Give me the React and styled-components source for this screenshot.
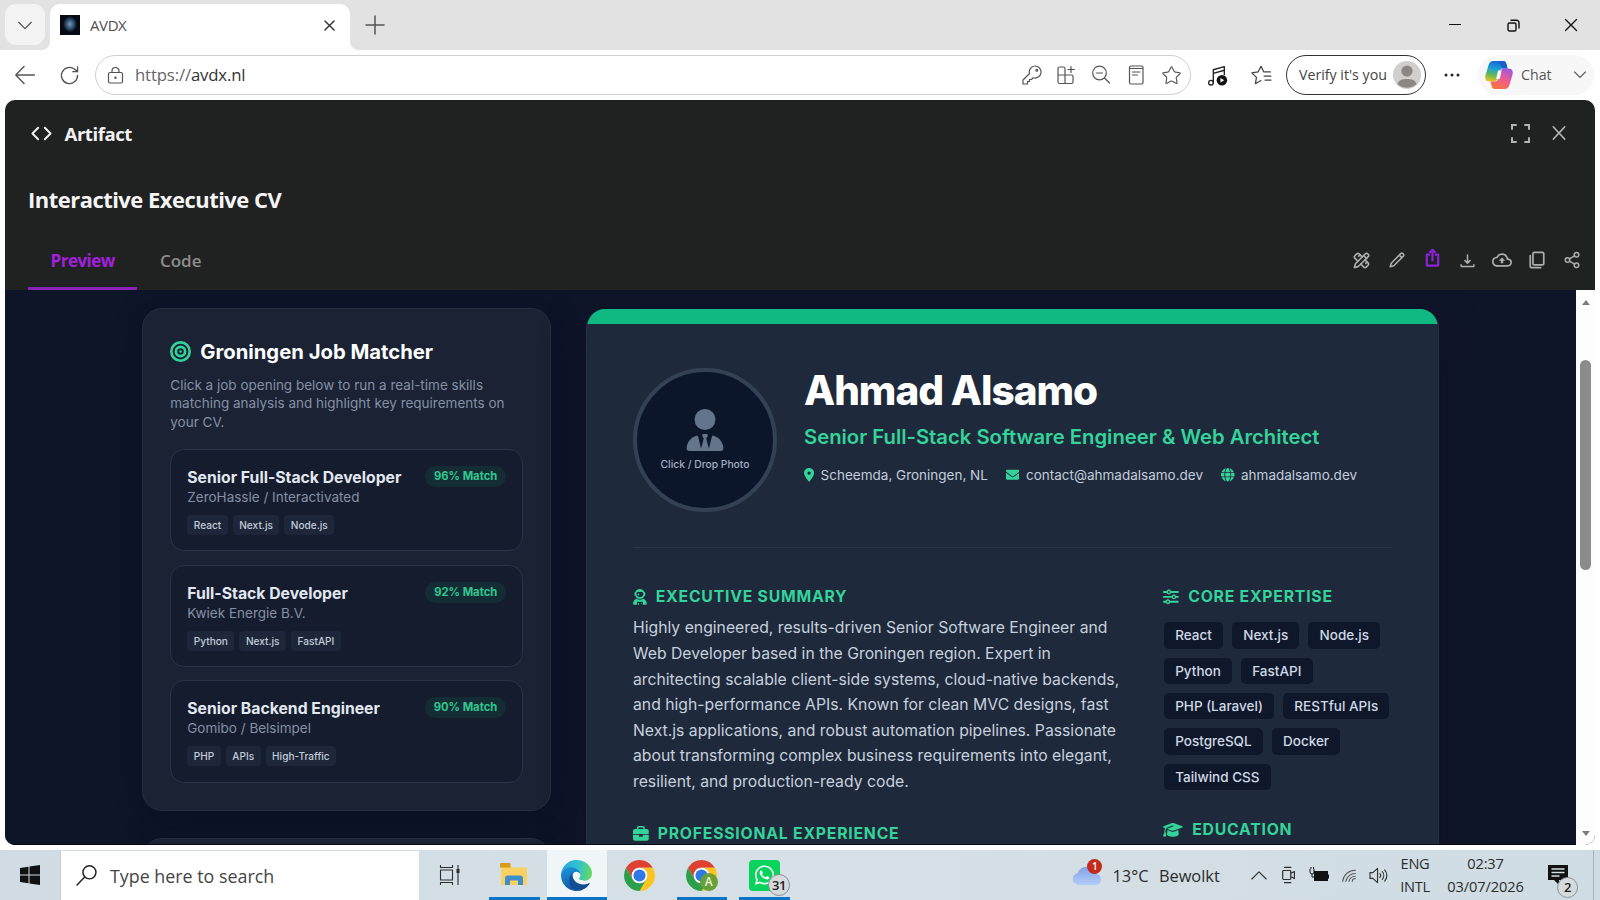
import React from 'react'
import styled, { createGlobalStyle } from 'styled-components'
import {
  FaBullseye,
  FaUserTie,
  FaLocationDot,
  FaEnvelope,
  FaGlobe,
  FaUserAstronaut,
  FaBriefcase,
  FaSliders,
  FaGraduationCap,
  FaWhatsapp,
} from 'react-icons/fa6'
import { MdOutlineCloudUpload } from 'react-icons/md'
import { PencilRuler, Share2, Star } from 'lucide-react'

const ui = '"Open Sans", "Noto Sans", sans-serif'
const inter = 'Inter, "Liberation Sans", sans-serif'
const green = '#34d399'

const jobs = [
  { title: 'Senior Full-Stack Developer', company: 'ZeroHassle / Interactivated', match: 96, tags: ['React', 'Next.js', 'Node.js'] },
  { title: 'Full-Stack Developer', company: 'Kwiek Energie B.V.', match: 92, tags: ['Python', 'Next.js', 'FastAPI'] },
  { title: 'Senior Backend Engineer', company: 'Gomibo / Belsimpel', match: 90, tags: ['PHP', 'APIs', 'High-Traffic'] },
]

const skills = ['React', 'Next.js', 'Node.js', 'Python', 'FastAPI', 'PHP (Laravel)', 'RESTful APIs', 'PostgreSQL', 'Docker', 'Tailwind CSS']

const GlobalStyle = createGlobalStyle`
  * {
    box-sizing: border-box;
  }
  body {
    margin: 0;
    overflow: hidden;
  }
  h1, h2, h3, p {
    margin: 0;
  }
  svg {
    display: block;
    flex: none;
  }
`

const Screen = styled.div`
  display: flex;
  flex-direction: column;
  width: 1600px;
  height: 900px;
  background: #fff;
  font-family: ${ui};
  color: #222;
`

/* browser chrome */

const TabStrip = styled.div`
  display: flex;
  height: 50px;
  padding: 4px 0 0 5px;
  background: #e2e2e2;
`

const TabMenu = styled.div`
  display: grid;
  place-items: center;
  width: 40px;
  height: 41px;
  margin-right: 5px;
  border-radius: 11px;
  background: #f3f3f3;
`

const Tab = styled.div`
  position: relative;
  display: flex;
  align-items: center;
  width: 300px;
  height: 46px;
  padding: 0 14px 4px 10px;
  border-radius: 10px 10px 0 0;
  background: #fff;
  font-size: 15px;
  letter-spacing: -0.4px;
  color: #505050;

  &::before,
  &::after {
    content: '';
    position: absolute;
    bottom: 0;
    width: 8px;
    height: 8px;
  }
  &::before {
    left: -8px;
    background: radial-gradient(circle at 0 0, #e2e2e2 7.5px, #fff 8px);
  }
  &::after {
    right: -8px;
    background: radial-gradient(circle at 100% 0, #e2e2e2 7.5px, #fff 8px);
  }
`

const Favicon = styled.div`
  width: 20px;
  height: 20px;
  margin-right: 10px;
  background: radial-gradient(ellipse 7px 8px at 50% 46%, #7898b4 0%, #35597a 50%, #050a15 100%);
`

const TabTitle = styled.span`
  flex: 1;
`

const NewTab = styled.div`
  display: grid;
  place-items: center;
  width: 50px;
  height: 42px;
  color: #555;
`

const WindowButtons = styled.div`
  display: flex;
  margin-left: auto;
`

const WindowButton = styled.div`
  display: grid;
  place-items: center;
  width: 58px;
  height: 42px;
  color: #111;
`

const AddressRow = styled.div`
  display: flex;
  align-items: center;
  height: 50px;
  padding: 0 6px 0 14px;
  color: #555;
`

const NavIcon = styled.div`
  display: grid;
  place-items: center;
  width: ${p => p.$w}px;
  height: 40px;
`

const AddressBar = styled.div`
  display: flex;
  align-items: center;
  width: 1096px;
  height: 40px;
  margin-left: 13px;
  padding: 0 1px 0 11px;
  border: 1px solid #cfcfcf;
  border-radius: 20px;
`

const Url = styled.span`
  flex: 1;
  margin-left: 11px;
  padding-bottom: 1px;
  font-size: 16.8px;
  letter-spacing: -0.17px;
  color: #666;

  b {
    font-weight: 400;
    color: #333;
  }
`

const Verify = styled.div`
  display: flex;
  align-items: center;
  justify-content: space-between;
  width: 140px;
  height: 40px;
  padding: 0 4px 1px 12px;
  border: 1.5px solid #333;
  border-radius: 20px;
  font-size: 14.2px;
  color: #444;
  white-space: nowrap;
`

const Chat = styled.div`
  display: flex;
  align-items: center;
  width: 116px;
  height: 40px;
  padding: 0 8px 0 7px;
  border-radius: 20px;
  background: #f7f7f7;
  font-size: 14.2px;
  color: #555;

  span {
    flex: 1;
    margin-left: 8px;
    padding-bottom: 1px;
  }
`

/* artifact panel */

const Panel = styled.div`
  display: flex;
  flex-direction: column;
  width: 1590px;
  height: 745px;
  margin: 0 5px;
  border-radius: 10px;
  overflow: hidden;
  background: #202222;
`

const PanelHeader = styled.div`
  display: flex;
  align-items: center;
  height: 66px;
  padding: 0 28px 0 26px;
  color: #f2f2f2;
`

const PanelName = styled.h2`
  flex: 1;
  margin-left: 12.5px;
  font-size: 18.6px;
  font-weight: 700;
  letter-spacing: -0.45px;
`

const HeaderActions = styled.div`
  display: flex;
  align-items: center;
  gap: 21px;
  color: #b3b3b3;
`

const PanelTitle = styled.h1`
  height: 68px;
  padding: 0 23px;
  font-size: 21.95px;
  font-weight: 700;
  letter-spacing: -0.5px;
  line-height: 67px;
  color: #f5f5f5;
`

const TabBar = styled.div`
  display: flex;
  height: 56px;
  padding-left: 23px;
`

const PanelTab = styled.div`
  padding: 0 22.5px;
  border-bottom: 3px solid ${p => (p.$active ? '#8a22b8' : 'transparent')};
  font-size: 17px;
  font-weight: ${p => (p.$active ? 700 : 600)};
  letter-spacing: ${p => (p.$active ? -0.5 : 0)}px;
  line-height: 53px;
  color: ${p => (p.$active ? '#a21fdc' : '#8d8d8d')};
`

const Tools = styled.div`
  display: flex;
  align-items: center;
  margin-left: auto;
  padding: 0 5px 4px 0;
  color: #adadad;
`

const Tool = styled.div`
  display: grid;
  place-items: center;
  width: 35.1px;
  padding-bottom: ${p => (p.$accent ? 6 : 0)}px;
  color: ${p => (p.$accent ? '#8a22d6' : 'inherit')};
`

const Viewport = styled.div`
  display: flex;
  height: 555px;
`

const Page = styled.div`
  display: flex;
  align-items: flex-start;
  width: 1571px;
  height: 555px;
  overflow: hidden;
  padding: 18px 0 0 137.3px;
  background: #0e1529;
  border-bottom: 1px solid #05091a;
  font-family: ${inter};
`

const Scrollbar = styled.div`
  display: flex;
  flex-direction: column;
  align-items: center;
  width: 19px;
  padding: 10px 0 9px;
  background: #fdfdfd;
`

const Thumb = styled.div`
  width: 11px;
  height: 210px;
  margin: 55px 1px auto 0;
  border-radius: 6px;
  background: #8b8b8b;
`

const Sidebar = styled.div`
  display: flex;
  flex-direction: column;
  gap: 27px;
  width: 409px;
  margin-right: 35.2px;
`

const SideCard = styled.section`
  height: ${p => p.$h || 'auto'};
  padding: 27px;
  border: 1px solid #242e41;
  border-radius: 20px;
  background: #1a2234;
  box-shadow: 0 4px 28px rgba(8, 10, 28, 0.45);
`

const SideTitle = styled.h2`
  display: flex;
  align-items: center;
  gap: 9px;
  margin-bottom: 8px;
  font-size: 20.25px;
  font-weight: 700;
  line-height: 31.5px;
  color: #fff;

  svg {
    color: ${green};
  }
`

const SideText = styled.p`
  margin-bottom: 17.2px;
  font-size: 13.5px;
  line-height: 18.7px;
  color: #8490a5;
`

const JobList = styled.div`
  display: flex;
  flex-direction: column;
  gap: 13.5px;
`

const Job = styled.article`
  height: 102.3px;
  padding: 16px;
  border: 1px solid #293447;
  border-radius: 14px;
  background: #151c2e;
`

const JobHead = styled.div`
  display: flex;
  justify-content: space-between;
  align-items: flex-start;
  height: 22px;
`

const JobTitle = styled.h3`
  font-size: 15.75px;
  font-weight: 700;
  line-height: 23px;
  color: #e2e8f0;
`

const Badge = styled.span`
  padding: 0 9px;
  border-radius: 11px;
  background: #142d34;
  font-size: 11.25px;
  font-weight: 700;
  line-height: 21px;
  color: #2fc791;
`

const Company = styled.p`
  margin-bottom: 9px;
  font-size: 13.5px;
  line-height: 18px;
  color: #8490a5;
`

const Tags = styled.div`
  display: flex;
  gap: 5px;
`

const Tag = styled.span`
  padding: 0 6.5px;
  border-radius: 4px;
  background: #1d2739;
  font-size: 10.1px;
  font-weight: 500;
  line-height: 20px;
  color: #c3ccd9;
`

const Resume = styled.main`
  width: 852.5px;
  height: 600px;
  margin-top: 1px;
  border: 1px solid #243044;
  border-top: 0;
  border-radius: 19px 19px 0 0;
  overflow: hidden;
  background: #1e293b;
  box-shadow: 0 16px 40px rgba(20, 14, 36, 0.55);
`

const Accent = styled.div`
  height: 14.7px;
  background: #10b981;
`

const Profile = styled.header`
  display: flex;
  height: 224.5px;
  margin: 0 46px 0 45.5px;
  padding-top: 44.5px;
  border-bottom: 1px solid #2a3649;
`

const Photo = styled.div`
  display: flex;
  flex-direction: column;
  align-items: center;
  width: 144px;
  height: 144px;
  margin-right: 27px;
  padding-top: 37px;
  border: 4px solid #334155;
  border-radius: 50%;
  background: #0c162b;
  font-size: 10.3px;
  font-weight: 500;
  color: #a3aec0;

  svg {
    color: #64748b;
    margin-bottom: 7px;
  }
`

const Name = styled.h1`
  font-size: 40.5px;
  font-weight: 800;
  letter-spacing: -0.025em;
  line-height: 45px;
  color: #fff;
`

const Role = styled.p`
  margin: 8px 0 13.3px;
  font-size: 20.25px;
  font-weight: 600;
  line-height: 31.5px;
  color: ${green};
`

const Contacts = styled.div`
  display: flex;
  gap: 18px;
  font-size: 13.5px;
  line-height: 18px;
  color: #c3cddb;
`

const Contact = styled.span`
  display: flex;
  align-items: center;
  gap: 6.5px;

  svg {
    width: ${p => p.$icon || 1}em;
    color: ${green};
  }
`

const Columns = styled.div`
  display: grid;
  grid-template-columns: 494.5px 229px;
  gap: 36px;
  padding: 36px 46px 0 45.5px;
`

const SectionTitle = styled.h2`
  display: flex;
  align-items: center;
  gap: 9px;
  font-size: 15.75px;
  font-weight: 700;
  letter-spacing: 0.05em;
  line-height: 26px;
  color: ${green};
  white-space: nowrap;

  svg {
    width: ${p => p.$icon || 1}em;
    height: 1em;
  }
`

const Summary = styled.p`
  margin: 5px 0 25.9px;
  font-size: 15.75px;
  line-height: 25.65px;
  color: #c7d0dd;
`

const Skills = styled.div`
  display: flex;
  flex-wrap: wrap;
  gap: 9px;
  margin: 12px 0 27px 0.5px;
`

const Skill = styled.span`
  padding: 0 11.2px;
  border-radius: 5px;
  background: #0f182b;
  font-size: 13.5px;
  font-weight: 500;
  line-height: 26.4px;
  color: #d0d8e4;
`

/* taskbar */

const Taskbar = styled.div`
  display: flex;
  height: 50px;
  margin-top: 5px;
  background: linear-gradient(90deg, #d0dbe4, #d6e0e6 50%, #cfdce3);
  color: #2c2c2c;
`

const TaskSlot = styled.div`
  display: grid;
  place-items: center;
  width: ${p => p.$w}px;
`

const Search = styled.div`
  display: flex;
  align-items: center;
  gap: 13px;
  width: 359px;
  margin-top: 1px;
  padding: 0 0 0 15px;
  border-left: 1px solid #c5cdd3;
  background: #fff;
  font-size: 17.85px;
  color: #444;
`

const Apps = styled.div`
  display: flex;
  gap: 2px;
  margin-left: 3px;
`

const AppButton = styled.div`
  position: relative;
  display: grid;
  place-items: center;
  width: 60.5px;
  background: ${p => (p.$active ? '#f0f5f8' : 'transparent')};

  &::after {
    content: '';
    position: absolute;
    bottom: 0;
    left: ${p => (p.$active ? 0 : 5)}px;
    right: ${p => (p.$active ? 0 : 5)}px;
    height: 3px;
    background: ${p => (p.$open ? '#0a74c9' : 'transparent')};
  }
`

const Counter = styled.span`
  position: absolute;
  left: ${p => p.$x}px;
  top: ${p => p.$y}px;
  width: ${p => p.$s}px;
  height: ${p => p.$s}px;
  border: ${p => (p.$ring ? '1px solid #8b9196' : '0')};
  border-radius: 50%;
  background: ${p => p.$bg};
  font-size: ${p => p.$fs || 13}px;
  font-weight: 600;
  line-height: ${p => p.$s - (p.$ring ? 2 : 0)}px;
  letter-spacing: -0.5px;
  text-align: center;
  color: ${p => p.$fg || '#222'};
`

const Tray = styled.div`
  display: flex;
  margin-left: auto;
`

const Weather = styled.div`
  position: relative;
  display: flex;
  align-items: center;
  gap: 10.4px;
  width: 171px;
  font-size: 16.4px;
  white-space: nowrap;
`

const TrayText = styled.div`
  display: flex;
  flex-direction: column;
  align-items: center;
  width: ${p => p.$w}px;
  padding-top: 2px;
  font-size: 14.6px;
  letter-spacing: ${p => p.$ls || 0}px;
  line-height: 22.5px;
`

const Notifications = styled.div`
  position: relative;
  width: 52px;
  margin-right: 6px;
  padding: 15px 0 0 6px;
  border-right: 1px solid #a9b3ba;
`

const Line = ({ size = 20, w = 1.4, box = 20, children, ...rest }) => (
  <svg width={size} height={size} viewBox={`0 0 ${box} ${box}`} fill="none" stroke="currentColor" strokeWidth={w} strokeLinecap="round" strokeLinejoin="round" {...rest}>
    {children}
  </svg>
)

const ChromeLogo = () => (
  <svg width="31" height="31" viewBox="0 0 48 48">
    <path d="M24 12H44.78A24 24 0 0 0 3.22 12L13.61 30A12 12 0 0 1 24 12z" fill="#de4032" />
    <path d="M34.39 30L24 48A24 24 0 0 0 44.78 12H24A12 12 0 0 1 34.39 30z" fill="#fbc420" />
    <path d="M13.61 30L3.22 12A24 24 0 0 0 24 48L34.39 30A12 12 0 0 1 13.61 30z" fill="#2c9f4b" />
    <circle cx="24" cy="24" r="12" fill="#fff" />
    <circle cx="24" cy="24" r="9.4" fill="#2f78e8" />
  </svg>
)

const EdgeLogo = () => (
  <svg width="31" height="31" viewBox="0 0 256 256">
    <defs>
      <linearGradient id="edgeTop" x1="0" y1="0.3" x2="1" y2="0.4">
        <stop offset="0" stopColor="#2aa7dc" />
        <stop offset="0.55" stopColor="#2fc2d0" />
        <stop offset="1" stopColor="#66d95f" />
      </linearGradient>
      <linearGradient id="edgeMid" x1="0" y1="0" x2="0.3" y2="1">
        <stop offset="0" stopColor="#1c9de0" />
        <stop offset="1" stopColor="#1357a8" />
      </linearGradient>
    </defs>
    <path fill="#124d94" d="M231 190.5c-3.4 1.8-6.9 3.4-10.5 4.7a101.5 101.5 0 0 1-35.9 6.4c-47.3 0-88.5-32.5-88.5-74.3.1-11.4 6.4-21.9 16.4-27.3-42.8 1.8-53.8 46.4-53.8 72.5 0 74 68.1 81.4 82.8 81.4 7.9 0 19.8-2.3 27-4.6l1.3-.4a128.3 128.3 0 0 0 66.6-52.8 4 4 0 0 0-5.4-5.6z" />
    <path fill="url(#edgeMid)" d="M105.7 241.4a79.2 79.2 0 0 1-22.7-21.3 80.7 80.7 0 0 1 29.5-120c3.2-1.5 8.5-4.1 15.6-4a32.4 32.4 0 0 1 25.7 13 31.9 31.9 0 0 1 6.3 18.7c0-.2 24.5-79.6-80-79.6-43.9 0-80 41.6-80 78.2a130.2 130.2 0 0 0 12.1 56 128 128 0 0 0 156.4 67.1 75.5 75.5 0 0 1-62.8-8z" />
    <path fill="url(#edgeTop)" d="M152.3 148.9c-.9 1-3.4 2.5-3.4 5.6 0 2.6 1.7 5.2 4.8 7.3 14.3 10 41.4 8.6 41.5 8.6a59.6 59.6 0 0 0 30.3-8.3 61.4 61.4 0 0 0 30.4-52.9c.3-22.4-8-37.3-11.3-43.9C223.5 23.9 177.7 0 128 0A128 128 0 0 0 0 126.2c.5-36.5 36.8-66 80-66 3.5 0 23.5.3 42 10.1 16.3 8.6 24.9 18.9 30.8 29.2 6.2 10.7 7.3 24.1 7.3 29.5 0 5.3-2.7 13.3-7.8 19.9z" />
  </svg>
)

const CopilotLogo = () => (
  <svg width="28" height="28" viewBox="0 0 28 28">
    <defs>
      <linearGradient id="copA" x1="0.4" y1="0" x2="0.2" y2="1">
        <stop offset="0" stopColor="#1668d8" />
        <stop offset="0.35" stopColor="#1b9fd6" />
        <stop offset="0.65" stopColor="#5cb85c" />
        <stop offset="1" stopColor="#f2c21b" />
      </linearGradient>
      <linearGradient id="copB" x1="0.8" y1="0" x2="0.3" y2="1">
        <stop offset="0" stopColor="#9a55e0" />
        <stop offset="0.5" stopColor="#ee5c92" />
        <stop offset="1" stopColor="#f9743c" />
      </linearGradient>
    </defs>
    <path d="M8.500 0h10c2 0 2.600 1.800 3.200 4l.8 3.500H18c-2 0-2.700 1-3.400 3.500l-1.500 5.500c-.8 2.800-1.900 4-4.400 4H4.500C1 20.500-.5 18 .6 14L3.300 4.800C4.200 1.700 5.500 0 8.500 0z" fill="url(#copA)" />
    <path d="M8.500 0h10c2 0 2.600 1.800 3.200 4l.8 3.500h-4C16.500 7.500 15 2 13.500.8 12.500.2 10.500 0 8.500 0z" fill="#1460c8" />
    <path d="M19.500 28h-10c-2 0-2.600-1.800-3.200-4l-.8-3.500H10c2 0 2.700-1 3.400-3.500l1.500-5.500c.8-2.800 1.900-4 4.400-4h4.200c3.500 0 5 2.500 3.900 6.500l-2.700 9.200c-.9 3.100-2.200 4.800-5.200 4.800z" fill="url(#copB)" />
    <path d="M13 9.500h3.500L14.800 18h-3.600z" fill="#fff" />
  </svg>
)

const FolderLogo = () => (
  <svg width="28" height="24" viewBox="0 0 28 24">
    <path d="M1 1.500h9l2 3H27v17.500H1z" fill="#f9d163" />
    <path d="M0 1a1 1 0 0 1 1-1h8.500a1 1 0 0 1 1 1v3.500H0z" fill="#d69a1c" />
    <path d="M5 22v-6.500a3 3 0 0 1 3-3h12a3 3 0 0 1 3 3V22h-5v-4.500h-8V22z" fill="#3e8fc9" />
  </svg>
)

const BrowserChrome = () => (
  <>
    <TabStrip>
      <TabMenu>
        <Line size={18} color="#555"><path d="M3 7l7 7 7-7" /></Line>
      </TabMenu>
      <Tab>
        <Favicon />
        <TabTitle>AVDX</TabTitle>
        <Line size={13} w={2.2} color="#333"><path d="M3 3l14 14M17 3L3 17" /></Line>
      </Tab>
      <NewTab>
        <Line w={1.5}><path d="M10 1v18M1 10h18" /></Line>
      </NewTab>
      <WindowButtons>
        <WindowButton><Line size={12} box={12} w={1.2}><path d="M0 5.500h12" /></Line></WindowButton>
        <WindowButton>
          <Line size={13} box={13} w={1.4}>
            <rect x="1" y="4" width="8" height="8" rx="1.500" />
            <path d="M4 1.200h5.500a2.500 2.500 0 0 1 2.500 2.500V9" />
          </Line>
        </WindowButton>
        <WindowButton><Line size={14} box={14} w={1.4}><path d="M1.500 1.500l11 11M12.500 1.500l-11 11" /></Line></WindowButton>
      </WindowButtons>
    </TabStrip>
    <AddressRow>
      <NavIcon $w={22}><Line size={20}><path d="M19.500 10H1M9 1.500L.8 10 9 18.500" /></Line></NavIcon>
      <NavIcon $w={21} />
      <NavIcon $w={25}><Line size={19}><path d="M18.500 10a8.500 8.500 0 1 1-3-6.500L18.500 6M18.500 1v5h-5" /></Line></NavIcon>
      <AddressBar>
        <Line size={17} box={17} w={1.2}>
          <rect x="1.500" y="5.500" width="14" height="10.500" rx="1.500" />
          <path d="M5 5.500V4a3.500 3.500 0 0 1 7 0v1.500" />
          <circle cx="8.500" cy="10.700" r=".6" fill="currentColor" />
        </Line>
        <Url>https://<b>avdx.nl</b></Url>
        <NavIcon $w={35}>
          <Line w={1.2}>
            <path d="M13 1a6 6 0 1 1-1.800 11.700L9.500 14.500H7.500v2H5.500v2.500H1v-4l6.500-6.500A6 6 0 0 1 13 1z" />
            <circle cx="14.800" cy="5.200" r=".9" />
          </Line>
        </NavIcon>
        <NavIcon $w={34}>
          <Line w={1.2}>
            <path d="M9 10V3.500A1.500 1.500 0 0 0 7.500 2h-4A1.500 1.500 0 0 0 2 3.500V17a1.500 1.500 0 0 0 1.500 1.500h12A1.500 1.500 0 0 0 17 17v-5.500a1.500 1.500 0 0 0-1.500-1.500H2M9 10v8.500M15 1.500v6M12 4.500h6.500" />
          </Line>
        </NavIcon>
        <NavIcon $w={35}>
          <Line w={1.2}><circle cx="8.500" cy="8" r="6.800" /><path d="M5.500 8h6M13.500 13l5 5" /></Line>
        </NavIcon>
        <NavIcon $w={36}>
          <Line w={1.2}><rect x="3.500" y="1" width="13.500" height="18" rx="1.500" /><path d="M3.500 3.500h13M6.500 7h7.500M6.500 10h5" /></Line>
        </NavIcon>
        <NavIcon $w={35}><Star size={21} strokeWidth={1.3} /></NavIcon>
      </AddressBar>
      <NavIcon $w={53}>
        <Line size={21} w={1.3} color="#222">
          <path d="M6 16.500V4.500L16.500 1.500V9M6 8l10.500-3" />
          <circle cx="3.800" cy="16.800" r="2.200" />
          <circle cx="14.200" cy="14.500" r="5" fill="#111" stroke="none" />
          <path d="M12.800 12.300v4.400l3.600-2.200z" fill="#fff" stroke="none" />
        </Line>
      </NavIcon>
      <NavIcon $w={35}>
        <Line size={21} w={1.2} color="#444">
          <path d="M9.500 14.800l-5.300 3 1-6L.8 7.500l6-.9L9.500 1.200l2.700 5.400h6.300M12.500 10.500h6.500M13.500 14.500h5.500" />
        </Line>
      </NavIcon>
      <NavIcon $w={7} />
      <Verify>
        Verify it's you
        <svg width="28" height="28" viewBox="0 0 28 28">
          <circle cx="14" cy="14" r="14" fill="#d0cfcd" />
          <circle cx="14" cy="10" r="5.600" fill="#8b8884" />
          <path d="M4.500 23c1-4 5-5 9.500-5s8.500 1 9.500 5a14 14 0 0 1-19 0z" fill="#8b8884" />
        </svg>
      </Verify>
      <NavIcon $w={52}>
        <svg width="16" height="4" viewBox="0 0 16 4" fill="#222">
          <circle cx="2" cy="2" r="1.500" /><circle cx="8" cy="2" r="1.500" /><circle cx="14" cy="2" r="1.500" />
        </svg>
      </NavIcon>
      <Chat>
        <CopilotLogo />
        <span>Chat</span>
        <Line size={12} w={1.8}><path d="M1 5l9 9 9-9" /></Line>
      </Chat>
    </AddressRow>
  </>
)

const JobCard = ({ title, company, match, tags }) => (
  <Job>
    <JobHead>
      <JobTitle>{title}</JobTitle>
      <Badge>{match}% Match</Badge>
    </JobHead>
    <Company>{company}</Company>
    <Tags>{tags.map(t => <Tag key={t}>{t}</Tag>)}</Tags>
  </Job>
)

const Artifact = () => (
  <Panel>
    <PanelHeader>
      <Line size={21} box={22} w={2}><path d="M7.500 5L1.500 11l6 6M14.500 5l6 6-6 6" /></Line>
      <PanelName>Artifact</PanelName>
      <HeaderActions>
        <Line size={19} w={2.3} strokeLinecap="butt" strokeLinejoin="miter"><path d="M1 6V1h5M14 1h5v5M19 14v5h-5M6 19H1v-5" /></Line>
        <Line size={16} w={2.2}><path d="M3 2.500l14 15M17 2.500L3 17.500" /></Line>
      </HeaderActions>
    </PanelHeader>
    <PanelTitle>Interactive Executive CV</PanelTitle>
    <TabBar>
      <PanelTab $active>Preview</PanelTab>
      <PanelTab>Code</PanelTab>
      <Tools>
        <Tool><PencilRuler size={17} strokeWidth={2.3} /></Tool>
        <Tool><Line size={16} w={2}><path d="M1.500 18.500l1.300-4.500L15 1.800a1.500 1.500 0 0 1 2.200 0l1 1a1.500 1.500 0 0 1 0 2.200L6 17.200zM13 4l3 3" /></Line></Tool>
        <Tool $accent><Line size={19} w={2.3} strokeLinecap="butt"><path d="M7.500 7H4v11.500h12V7h-3.500M10 14V3M6.800 5L10 1.800 13.200 5" /></Line></Tool>
        <Tool><Line size={15} w={2} strokeLinecap="butt"><path d="M10 2v11M6 9.500l4 4 4-4M1 18h18M1.500 15v3M18.500 15v3" /></Line></Tool>
        <Tool><MdOutlineCloudUpload size={20} /></Tool>
        <Tool><Line size={18} w={1.9}><rect x="5.500" y="1.500" width="12" height="14" rx="1.500" /><path d="M2.500 5v12a1.500 1.500 0 0 0 1.500 1.500h10" /></Line></Tool>
        <Tool><Share2 size={18} /></Tool>
      </Tools>
    </TabBar>
    <Viewport>
      <Page>
        <Sidebar>
          <SideCard>
            <SideTitle><FaBullseye size={21} />Groningen Job Matcher</SideTitle>
            <SideText>Click a job opening below to run a real-time skills matching analysis and highlight key requirements on your CV.</SideText>
            <JobList>{jobs.map(job => <JobCard key={job.title} {...job} />)}</JobList>
          </SideCard>
          <SideCard $h="90px" />
        </Sidebar>
        <Resume>
          <Accent />
          <Profile>
            <Photo><FaUserTie size={42} />Click / Drop Photo</Photo>
            <div>
              <Name>Ahmad Alsamo</Name>
              <Role>Senior Full-Stack Software Engineer &amp; Web Architect</Role>
              <Contacts>
                <Contact $icon={0.75}><FaLocationDot />Scheemda, Groningen, NL</Contact>
                <Contact><FaEnvelope />contact@ahmadalsamo.dev</Contact>
                <Contact><FaGlobe />ahmadalsamo.dev</Contact>
              </Contacts>
            </div>
          </Profile>
          <Columns>
            <div>
              <SectionTitle $icon={0.875}><FaUserAstronaut />EXECUTIVE SUMMARY</SectionTitle>
              <Summary>
                Highly engineered, results-driven Senior Software Engineer and Web Developer based in the Groningen
                region. Expert in architecting scalable client-side systems, cloud-native backends, and
                high-performance APIs. Known for clean MVC designs, fast Next.js applications, and robust automation
                pipelines. Passionate about transforming complex business requirements into elegant, resilient, and
                production-ready code.
              </Summary>
              <SectionTitle><FaBriefcase />PROFESSIONAL EXPERIENCE</SectionTitle>
            </div>
            <div>
              <SectionTitle><FaSliders />CORE EXPERTISE</SectionTitle>
              <Skills>{skills.map(s => <Skill key={s}>{s}</Skill>)}</Skills>
              <SectionTitle $icon={1.25}><FaGraduationCap />EDUCATION</SectionTitle>
            </div>
          </Columns>
        </Resume>
      </Page>
      <Scrollbar>
        <svg width="8" height="5" viewBox="0 0 8 5" fill="#7d7d7d"><path d="M4 0l4 5H0z" /></svg>
        <Thumb />
        <svg width="8" height="5" viewBox="0 0 8 5" fill="#7d7d7d"><path d="M4 5L0 0h8z" /></svg>
      </Scrollbar>
    </Viewport>
  </Panel>
)

const WindowsTaskbar = () => (
  <Taskbar>
    <TaskSlot $w={60}>
      <svg width="20" height="20" viewBox="0 0 20 20" fill="#111">
        <path d="M0 3l8.500-1.200v7.700H0zM9.500 1.600L20 0v9.500H9.500zM0 10.500h8.500v7.700L0 17zM9.500 10.500H20V20L9.500 18.400z" />
      </svg>
    </TaskSlot>
    <Search>
      <Line size={21} w={1.4} color="#222"><circle cx="12.800" cy="7" r="6.200" /><path d="M8.300 11.500L1 19" /></Line>
      Type here to search
    </Search>
    <TaskSlot $w={62}>
      <Line size={22} box={22} w={1.1} strokeLinecap="butt">
        <rect x="1.500" y="6" width="12" height="10" />
        <path d="M1.500 1v2.500h12V1M1.500 21v-2.500h12V21M19 1v20" />
        <path d="M19 5v4" strokeWidth="3" />
      </Line>
    </TaskSlot>
    <Apps>
      <AppButton $open><FolderLogo /></AppButton>
      <AppButton $open $active><EdgeLogo /></AppButton>
      <AppButton><ChromeLogo /></AppButton>
      <AppButton $open>
        <ChromeLogo />
        <Counter $x={28} $y={23} $s={18} $bg="#689f38" $fg="#e8f5d8" $fs={12}>A</Counter>
      </AppButton>
      <AppButton $open>
        <svg width="31" height="31" viewBox="0 0 31 31">
          <rect width="31" height="31" rx="4" fill="#07d35d" />
          <FaWhatsapp x="4.500" y="4" size={22} color="#fff" />
        </svg>
        <Counter $x={34} $y={24} $s={22} $ring $bg="#d5dadd">31</Counter>
      </AppButton>
    </Apps>
    <Tray>
      <Weather>
        <svg width="30" height="20" viewBox="0 0 30 20">
          <defs>
            <linearGradient id="cloud" x1="0" y1="0" x2="0" y2="1">
              <stop offset="0" stopColor="#7fa4e8" />
              <stop offset="1" stopColor="#b5ccf8" />
            </linearGradient>
          </defs>
          <path d="M6.500 20a6 6 0 0 1-.8-11.900A10 10 0 0 1 24.600 9 5.600 5.600 0 0 1 24 20z" fill="url(#cloud)" />
        </svg>
        <Counter $x={15} $y={9} $s={15} $bg="#c42b1c" $fg="#fff" $fs={10}>1</Counter>
        <span>13°C</span>
        <span>Bewolkt</span>
      </Weather>
      <TaskSlot $w={31}><Line size={16} color="#333"><path d="M1 15l9-9 9 9" /></Line></TaskSlot>
      <TaskSlot $w={30}>
        <Line size={18} w={1.3}><rect x="3" y="5" width="9" height="10" rx="1" /><path d="M12 8l4-2v8l-4-2M5 1.500h7M5 18.500h7" /></Line>
      </TaskSlot>
      <TaskSlot $w={30}>
        <svg width="20" height="16" viewBox="0 0 20 16" fill="#111">
          <path d="M5 4h14v10H5zM19 7.500h1v4h-1z" />
          <path d="M1 2v3a2 2 0 0 0 4 0V2M3 7v3h3M2 0v2M4.500 0v2" fill="none" stroke="#111" />
        </svg>
      </TaskSlot>
      <TaskSlot $w={30}>
        <Line size={16} w={1.3} color="#555"><path d="M2 18A16 16 0 0 1 18 4M6 18A12 12 0 0 1 18 8M10 18a8 8 0 0 1 8-6.500M14 18a4 4 0 0 1 4-3.500" /></Line>
      </TaskSlot>
      <TaskSlot $w={28}>
        <Line size={19} w={1.2} color="#333"><path d="M1 7v6h3l5 4.500v-15L4 7zM11.500 8a3 3 0 0 1 0 4M14 6a6 6 0 0 1 0 8M16.500 4a9 9 0 0 1 0 12" /></Line>
      </TaskSlot>
      <TrayText $w={46} $ls={-0.3}><span>ENG</span><span>INTL</span></TrayText>
      <TrayText $w={95} $ls={-0.1}><span>02:37</span><span>03/07/2026</span></TrayText>
      <TaskSlot $w={9} />
      <Notifications>
        <svg width="20" height="20" viewBox="0 0 20 20">
          <path d="M0 0h20v15H11v5l-5-5H0z" fill="#111" />
          <path d="M3.500 4h13M3.500 7.500h13M3.500 11h8" stroke="#d3dee5" strokeWidth="1.300" />
        </svg>
        <Counter $x={15} $y={27} $s={21} $ring $bg="#d5dadd">2</Counter>
      </Notifications>
    </Tray>
  </Taskbar>
)

export default function App() {
  return (
    <Screen>
      <GlobalStyle />
      <BrowserChrome />
      <Artifact />
      <WindowsTaskbar />
    </Screen>
  )
}
